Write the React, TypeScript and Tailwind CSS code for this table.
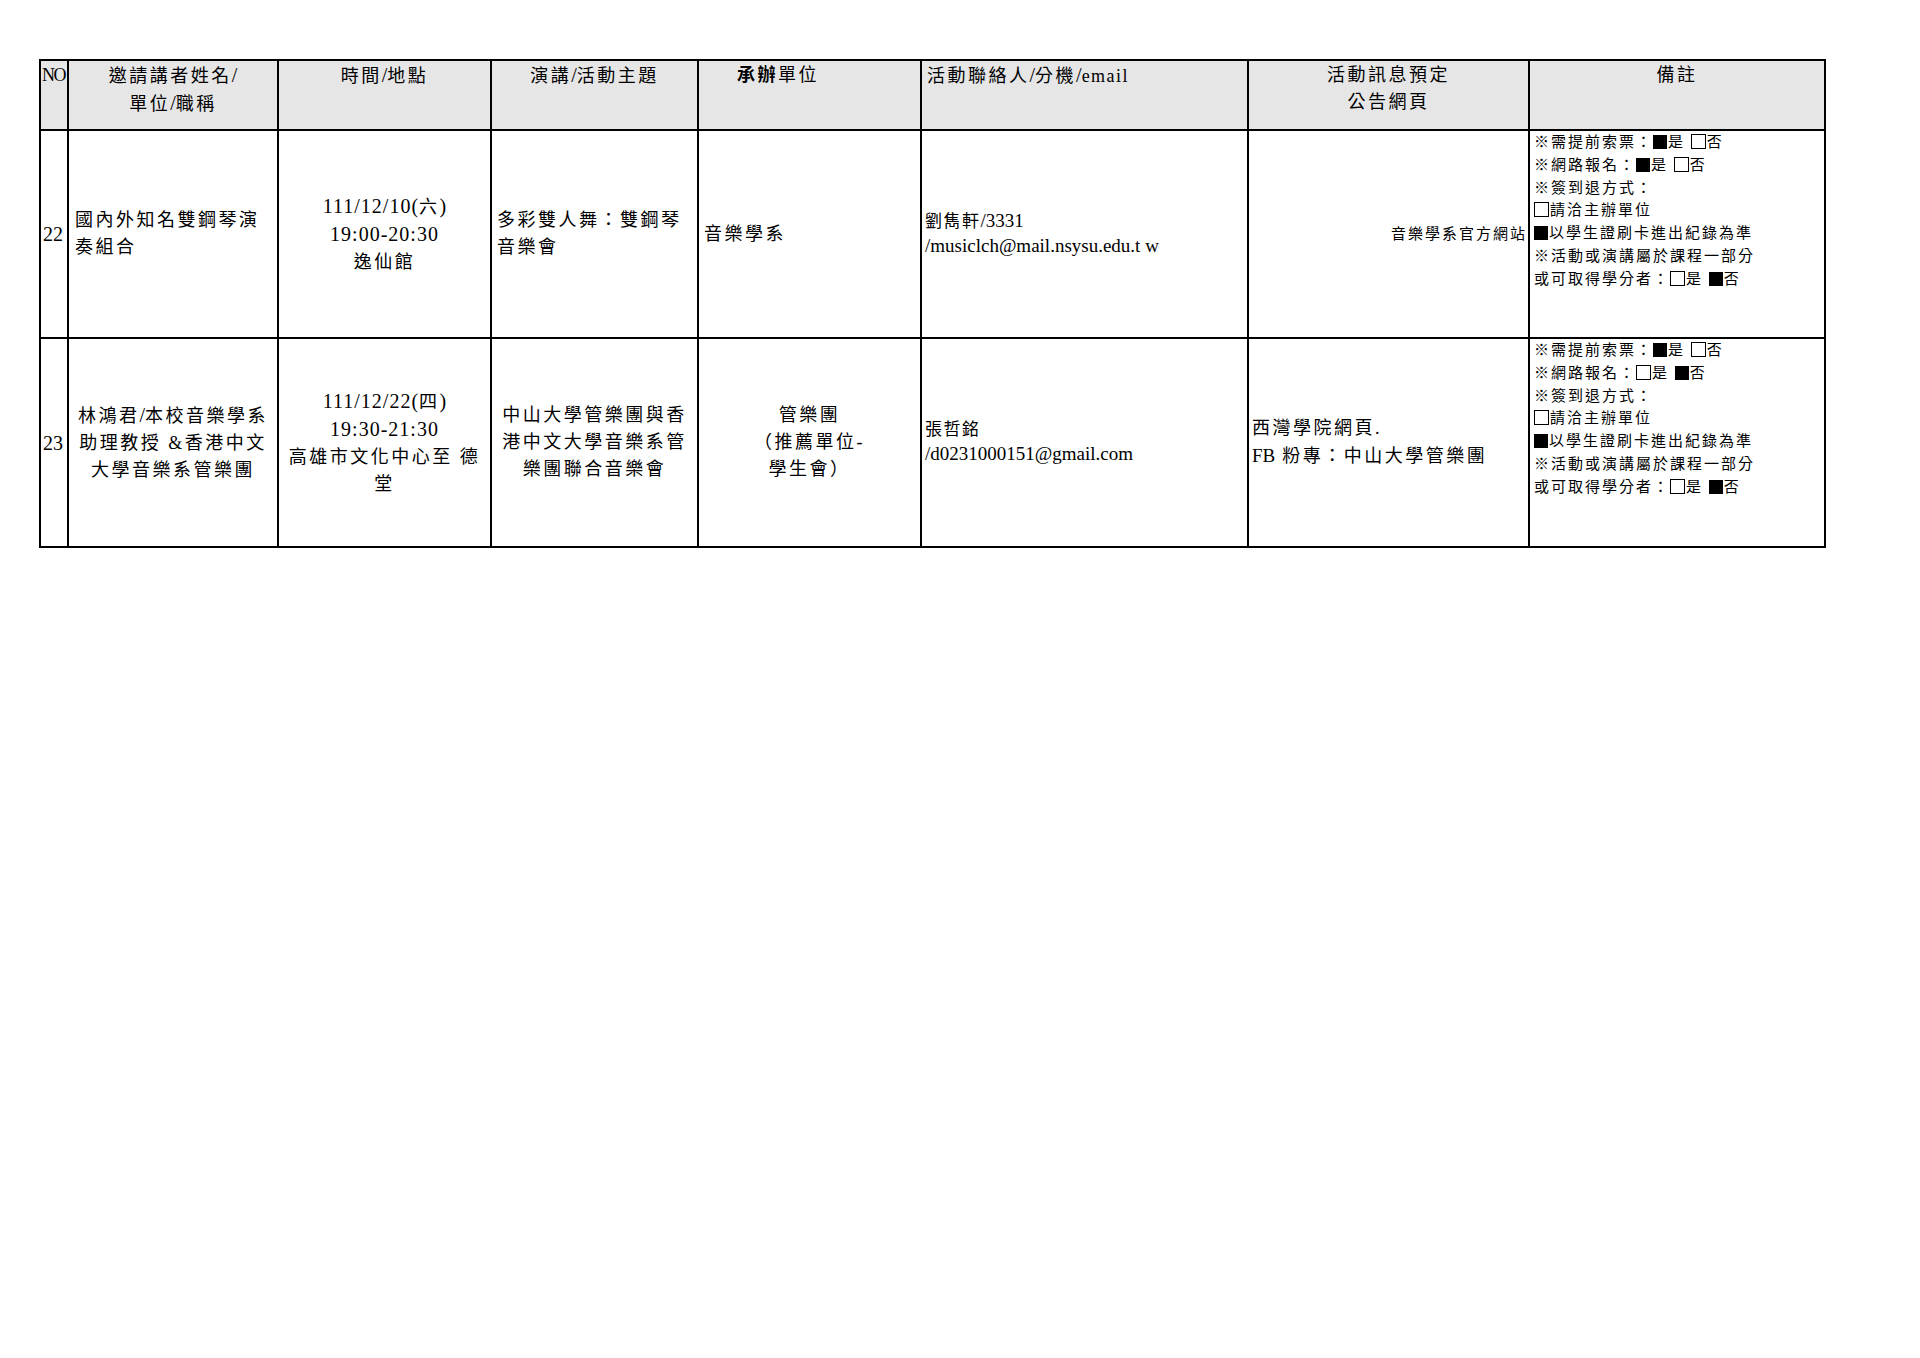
import React from "react";

const cell = "border-2 border-black whitespace-nowrap";
const cjk = "text-[18px] tracking-[2.5px] leading-[27px] font-normal";

function L({ children, size = "text-[20px]", track = "tracking-normal" }: { children: React.ReactNode; size?: string; track?: string }) {
  return <span className={`${size} ${track}`}>{children}</span>;
}

function Box({ on }: { on?: boolean }) {
  return on ? (
    <span className="inline-block w-[14px] h-[14px] bg-black align-[-2px] mr-[1px]" />
  ) : (
    <span className="inline-block w-[15px] h-[15px] border border-black bg-white align-[-2px] mr-[1px]" />
  );
}

function Remarks({ online }: { online: boolean }) {
  return (
    <div className="text-[15px] tracking-[2px] leading-[22.8px]">
      <div>
        ※需提前索票：<Box on />是 <Box />否
      </div>
      <div>
        ※網路報名：<Box on={online} />是 <Box on={!online} />否
      </div>
      <div>※簽到退方式：</div>
      <div>
        <Box />請洽主辦單位
      </div>
      <div>
        <Box on />以學生證刷卡進出紀錄為準
      </div>
      <div>※活動或演講屬於課程一部分</div>
      <div>
        或可取得學分者：<Box />是 <Box on />否
      </div>
    </div>
  );
}

export default function App() {
  return (
    <div className="w-[1920px] h-[1358px] bg-white text-black font-['Liberation_Serif','Noto_Sans_CJK_TC',serif]">
      <div className="pt-[59px] pl-[39px]">
        <table className="border-collapse table-fixed w-[1785px]">
          <colgroup>
            <col className="w-[28px]" />
            <col className="w-[210px]" />
            <col className="w-[213px]" />
            <col className="w-[207px]" />
            <col className="w-[223px]" />
            <col className="w-[327px]" />
            <col className="w-[281px]" />
            <col className="w-[296px]" />
          </colgroup>
          <tbody>
            <tr className="h-[70px] bg-[#e6e6e6]">
              <td className={`${cell} align-top text-left pl-[1px] pt-[1px] text-[18px] leading-[27px] tracking-[-1.5px]`}>NO</td>
              <td className={`${cell} ${cjk} align-top text-center pt-[1px]`}>
                邀請講者姓名<L>/</L>
                <br />
                單位<L>/</L>職稱
              </td>
              <td className={`${cell} ${cjk} align-top text-center pt-[1px]`}>
                時間<L>/</L>地點
              </td>
              <td className={`${cell} ${cjk} align-top text-center pt-[1px]`}>
                演講<L>/</L>活動主題
              </td>
              <td className={`${cell} ${cjk} align-top text-left pl-[38px] pt-[1px]`}>
                <span className="font-bold">承辦</span>單位
              </td>
              <td className={`${cell} ${cjk} align-top text-left pl-[5px] pt-[1px]`}>
                活動聯絡人<L>/</L>分機<L>/</L>
                <span className="tracking-[1.5px]">email</span>
              </td>
              <td className={`${cell} ${cjk} align-top text-center pt-[1px]`}>
                活動訊息預定
                <br />
                公告網頁
              </td>
              <td className={`${cell} ${cjk} align-top text-center pt-[1px]`}>備註</td>
            </tr>

            <tr className="h-[208px]">
              <td className={`${cell} align-middle text-left pl-[2px] text-[20px]`}>22</td>
              <td className={`${cell} ${cjk} align-middle text-left pl-[6px]`}>
                國內外知名雙鋼琴演
                <br />
                奏組合
              </td>
              <td className={`${cell} ${cjk} align-middle text-center`}>
                <L track="tracking-[1px]">111/12/10(</L>六<L>)</L>
                <br />
                <L track="tracking-[1px]">19:00-20:30</L>
                <br />
                逸仙館
              </td>
              <td className={`${cell} ${cjk} align-middle text-left pl-[5px]`}>
                多彩雙人舞：雙鋼琴
                <br />
                音樂會
              </td>
              <td className={`${cell} ${cjk} align-middle text-left pl-[5px]`}>音樂學系</td>
              <td className={`${cell} align-middle text-left pl-[3px] text-[17px] leading-[24px] tracking-[1.5px]`}>
                劉雋軒<L size="text-[19px]">/3331</L>
                <br />
                <L size="text-[19px]">/musiclch@mail.nsysu.edu.t w</L>
              </td>
              <td className={`${cell} align-middle text-right pr-[1px] text-[15px] tracking-[2px]`}>音樂學系官方網站</td>
              <td className={`${cell} align-top text-left pl-[4px] pt-0`}>
                <Remarks online={true} />
              </td>
            </tr>

            <tr className="h-[209px]">
              <td className={`${cell} align-middle text-left pl-[2px] text-[20px]`}>23</td>
              <td className={`${cell} ${cjk} align-middle text-center`}>
                林鴻君<L>/</L>本校音樂學系
                <br />
                助理教授 &amp;香港中文
                <br />
                大學音樂系管樂團
              </td>
              <td className={`${cell} ${cjk} align-middle text-center`}>
                <L track="tracking-[1px]">111/12/22(</L>四<L>)</L>
                <br />
                <L track="tracking-[1px]">19:30-21:30</L>
                <br />
                高雄市文化中心至 德
                <br />
                堂
              </td>
              <td className={`${cell} ${cjk} align-middle text-center`}>
                中山大學管樂團與香
                <br />
                港中文大學音樂系管
                <br />
                樂團聯合音樂會
              </td>
              <td className={`${cell} ${cjk} align-middle text-center`}>
                管樂團
                <br />
                （推薦單位-
                <br />
                學生會）
              </td>
              <td className={`${cell} align-middle text-left pl-[3px] text-[17px] leading-[24px] tracking-[1.5px]`}>
                張哲銘
                <br />
                <L size="text-[19px]">/d0231000151@gmail.com</L>
              </td>
              <td className={`${cell} ${cjk} align-middle text-left pl-[3px] leading-[25px]`}>
                西灣學院網頁.
                <br />
                <L size="text-[19px]">FB</L> 粉專：中山大學管樂團
              </td>
              <td className={`${cell} align-top text-left pl-[4px] pt-0`}>
                <Remarks online={false} />
              </td>
            </tr>
          </tbody>
        </table>
      </div>
    </div>
  );
}
